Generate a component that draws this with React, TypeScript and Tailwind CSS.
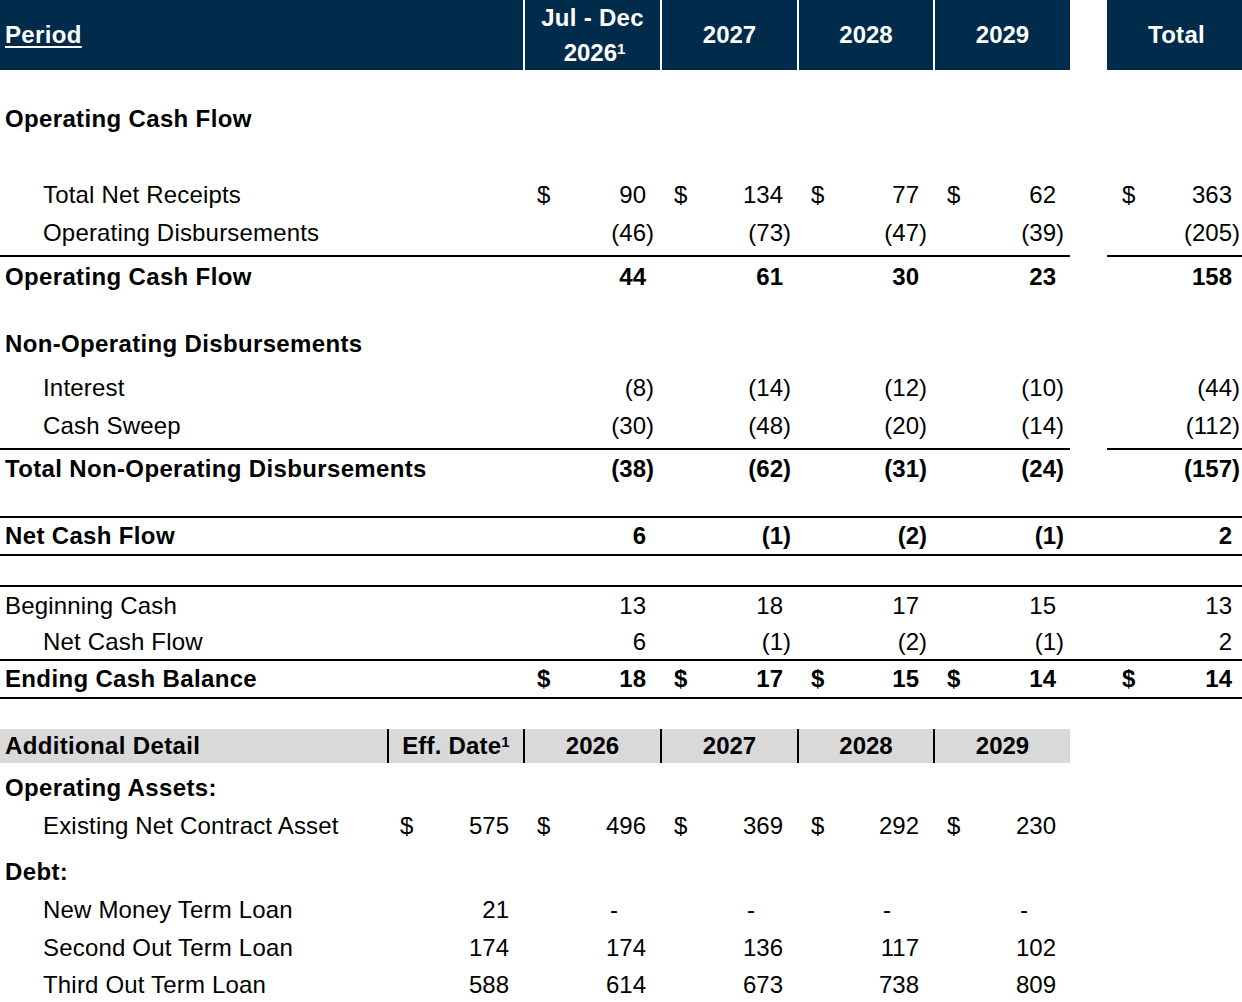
import React from "react";

// Cash flow forecast sheet — Excel-style table export.
// Columns: label | eff. date | Jul-Dec 2026 | 2027 | 2028 | 2029 | gap | Total

const GRID = "grid grid-cols-[387px_136px_137px_137px_136px_137px_37px_135px]";
const NAVY = "bg-[#012b4a]";

type Line = "none" | "split" | "full";

function Value({ v, right = "pr-[6px]" }: { v: string; right?: string }) {
  if (v === "-") return <span className="pr-[42px]">-</span>;
  if (v.startsWith("(")) return <span className={right}>{v}</span>;
  return (
    <span className={right}>
      {v}
      <span className="invisible">)</span>
    </span>
  );
}

function Cell({
  v,
  dollar,
  border,
  left = "pl-[14px]",
  right,
}: {
  v?: string;
  dollar?: boolean;
  border?: string;
  left?: string;
  right?: string;
}) {
  return (
    <div className={`flex items-center justify-between ${border ?? ""}`}>
      <span className={left}>{dollar ? "$" : ""}</span>
      {v !== undefined && <Value v={v} right={right} />}
    </div>
  );
}

function Row({
  label,
  indent,
  bold,
  vals,
  dollar,
  h,
  top = "none",
  bottom = false,
}: {
  label: string;
  indent?: boolean;
  bold?: boolean;
  vals?: string[];
  dollar?: boolean;
  h: string;
  top?: Line;
  bottom?: boolean;
}) {
  const cellBorder = top === "split" ? "border-t-2 border-black" : "";
  return (
    <div
      className={`${GRID} ${h} ${bold ? "font-bold" : ""} ${
        top === "full" ? "border-t-2 border-black" : ""
      } ${bottom ? "border-b-2 border-black" : ""}`}
    >
      <div
        className={`col-span-2 flex items-center ${indent ? "pl-[43px]" : "pl-[5px]"} ${
          bold ? "tracking-[0.35px]" : "tracking-[0.18px]"
        } ${cellBorder}`}
      >
        {label}
      </div>
      {vals ? (
        <>
          {vals.slice(0, 4).map((v, i) => (
            <Cell key={i} v={v} dollar={dollar} border={cellBorder} />
          ))}
          <div />
          <Cell v={vals[4]} dollar={dollar} border={cellBorder} left="pl-[15px]" right="pr-[2px]" />
        </>
      ) : (
        <>
          <div className={cellBorder} />
          <div className={cellBorder} />
          <div className={cellBorder} />
          <div className={cellBorder} />
          <div />
          <div className={cellBorder} />
        </>
      )}
    </div>
  );
}

function DetailRow({
  label,
  indent,
  bold,
  vals,
  dollar,
  h,
}: {
  label: string;
  indent?: boolean;
  bold?: boolean;
  vals?: string[];
  dollar?: boolean;
  h: string;
}) {
  return (
    <div className={`${GRID} ${h} ${bold ? "font-bold" : ""}`}>
      <div
        className={`flex items-center whitespace-nowrap ${indent ? "pl-[43px]" : "pl-[5px]"} ${
          bold ? "tracking-[0.35px]" : "tracking-[0.18px]"
        }`}
      >
        {label}
      </div>
      {vals?.map((v, i) => (
        <Cell key={i} v={v} dollar={dollar} left={i === 0 ? "pl-[13px]" : "pl-[14px]"} />
      ))}
    </div>
  );
}

function Header() {
  const sep = "border-l-2 border-white";
  return (
    <div className={`${GRID} h-[70px] font-bold text-white`}>
      <div className={`col-span-2 flex items-center pl-[5px] ${NAVY}`}>
        <span className="underline decoration-2 underline-offset-[3px] tracking-[0.35px]">Period</span>
      </div>
      <div className={`flex h-[70px] flex-col items-center justify-center leading-[35px] ${NAVY} ${sep}`}>
        <span className="tracking-[0.3px]">Jul - Dec</span>
        <span className="pl-[4px]">
          2026<sup className="text-[15px]">1</sup>
        </span>
      </div>
      {["2027", "2028", "2029"].map((y) => (
        <div key={y} className={`flex items-center justify-center ${NAVY} ${sep}`}>
          {y}
        </div>
      ))}
      <div />
      <div className={`flex items-center justify-center pl-[4px] tracking-[0.3px] ${NAVY}`}>Total</div>
    </div>
  );
}

function DetailHeader() {
  const sep = "border-l-2 border-black";
  return (
    <div className={`${GRID} h-[34px] font-bold`}>
      <div className="flex items-center bg-[#d9d9d9] pl-[5px] tracking-[0.35px]">Additional Detail</div>
      <div className={`flex items-center justify-center bg-[#d9d9d9] ${sep}`}>
        <span className="tracking-[0.2px]">
          Eff. Date<sup className="text-[15px]">1</sup>
        </span>
      </div>
      {["2026", "2027", "2028", "2029"].map((y) => (
        <div key={y} className={`flex items-center justify-center bg-[#d9d9d9] ${sep}`}>
          {y}
        </div>
      ))}
    </div>
  );
}

export default function App() {
  return (
    <div className="h-[1002px] w-[1242px] overflow-hidden bg-white font-['Liberation_Sans',Arial,sans-serif] text-[24px] leading-none text-black">
      <Header />
      <div className="h-[30px]" />
      <Row label="Operating Cash Flow" bold h="h-[38px]" />
      <div className="h-[38px]" />
      <Row label="Total Net Receipts" indent dollar vals={["90", "134", "77", "62", "363"]} h="h-[38px]" />
      <Row label="Operating Disbursements" indent vals={["(46)", "(73)", "(47)", "(39)", "(205)"]} h="h-[38px]" />
      <div className="h-[3px]" />
      <Row label="Operating Cash Flow" bold top="split" vals={["44", "61", "30", "23", "158"]} h="h-[41px]" />
      <div className="h-[29px]" />
      <Row label="Non-Operating Disbursements" bold h="h-[38px]" />
      <div className="h-[6px]" />
      <Row label="Interest" indent vals={["(8)", "(14)", "(12)", "(10)", "(44)"]} h="h-[38px]" />
      <Row label="Cash Sweep" indent vals={["(30)", "(48)", "(20)", "(14)", "(112)"]} h="h-[38px]" />
      <div className="h-[3px]" />
      <Row
        label="Total Non-Operating Disbursements"
        bold
        top="split"
        vals={["(38)", "(62)", "(31)", "(24)", "(157)"]}
        h="h-[39px]"
      />
      <div className="h-[29px]" />
      <Row label="Net Cash Flow" bold top="full" bottom vals={["6", "(1)", "(2)", "(1)", "2"]} h="h-[40px]" />
      <div className="h-[29px]" />
      <Row label="Beginning Cash" top="full" vals={["13", "18", "17", "15", "13"]} h="h-[40px]" />
      <Row label="Net Cash Flow" indent vals={["6", "(1)", "(2)", "(1)", "2"]} h="h-[34px]" />
      <Row
        label="Ending Cash Balance"
        bold
        dollar
        top="full"
        bottom
        vals={["18", "17", "15", "14", "14"]}
        h="h-[40px]"
      />
      <div className="h-[30px]" />
      <DetailHeader />
      <div className="h-[6px]" />
      <DetailRow label="Operating Assets:" bold h="h-[38px]" />
      <DetailRow
        label="Existing Net Contract Asset"
        indent
        dollar
        vals={["575", "496", "369", "292", "230"]}
        h="h-[38px]"
      />
      <div className="h-[8px]" />
      <DetailRow label="Debt:" bold h="h-[38px]" />
      <DetailRow label="New Money Term Loan" indent vals={["21", "-", "-", "-", "-"]} h="h-[38px]" />
      <DetailRow label="Second Out Term Loan" indent vals={["174", "174", "136", "117", "102"]} h="h-[38px]" />
      <DetailRow label="Third Out Term Loan" indent vals={["588", "614", "673", "738", "809"]} h="h-[36px]" />
    </div>
  );
}
